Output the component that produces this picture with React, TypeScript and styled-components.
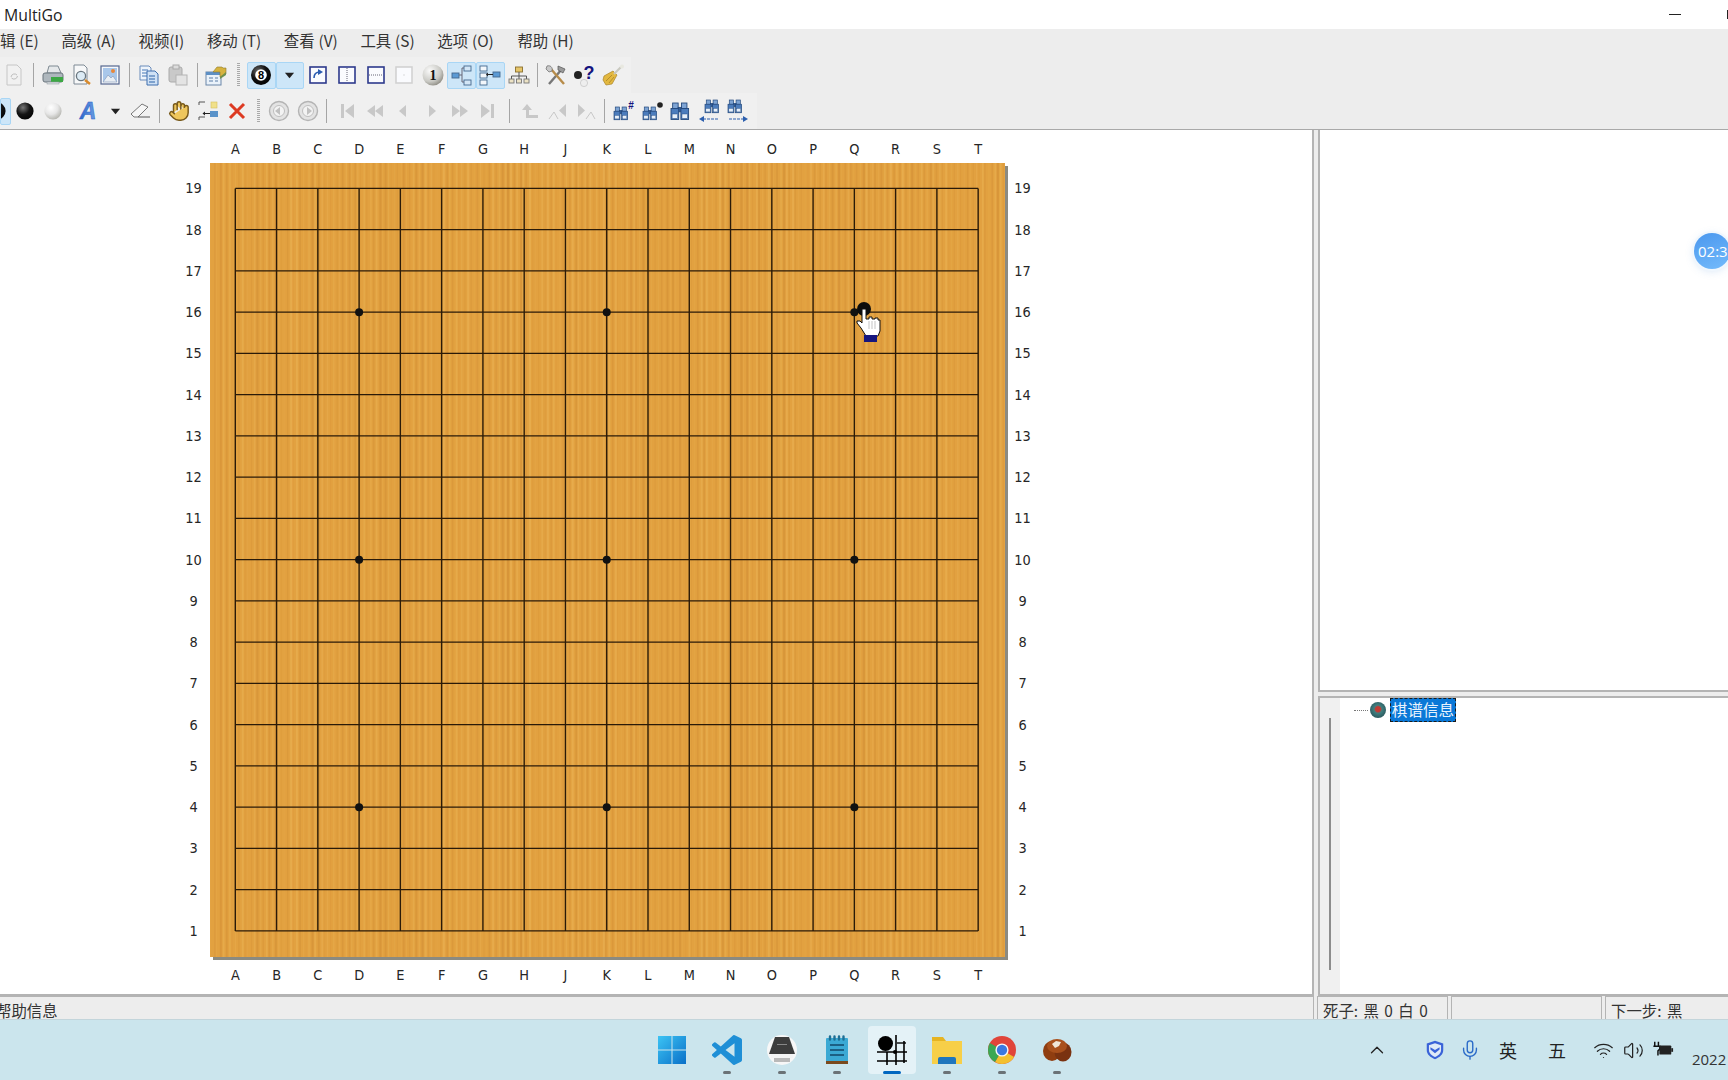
import React from "react";
import styled, { createGlobalStyle } from "styled-components";
import { ChevronUp, Mic, Wifi, Volume2, Hand } from "lucide-react";

const Global = createGlobalStyle`
  html, body { margin: 0; padding: 0; width: 1728px; height: 1080px; overflow: hidden; background: #fff; }
  * { box-sizing: border-box; }
`;

const cjk = `"Noto Sans CJK SC", "Noto Sans", sans-serif`;
const label = `"DejaVu Sans", "Liberation Sans", sans-serif`;

const Screen = styled.div`
  position: relative;
  width: 1728px;
  height: 1080px;
  overflow: hidden;
  display: flex;
  flex-direction: column;
  background: #ededed;
  color: #222;
  font-family: ${cjk};
`;

const TitleBar = styled.div`
  height: 29px;
  flex: none;
  background: #fff;
  display: flex;
  align-items: center;
  padding-left: 4px;
  font: 15.8px "Open Sans", "Noto Sans", sans-serif;
  color: #222;
`;
const TitleText = styled.span`
  flex: 1;
`;
const Minimize = styled.span`
  width: 12px;
  height: 1px;
  background: #222;
  margin-right: 46px;
`;
const MaxEdge = styled.span`
  width: 2px;
  height: 9px;
  background: #222;
  margin-right: -1px;
`;

const MenuBar = styled.div`
  height: 24px;
  flex: none;
  display: flex;
  align-items: center;
  gap: 22.7px;
  word-spacing: 0.4px;
  padding-bottom: 2px;
  font-size: 15.4px;
  color: #333;
  white-space: nowrap;
`;
const MenuItem = styled.span<{ $ml?: number }>`
  margin-left: ${(p) => p.$ml ?? 0}px;
`;

const Toolbars = styled.div`
  height: 77px;
  flex: none;
  padding-top: 4px;
  border-bottom: 1px solid #a9a9a9;
`;
const ToolRow = styled.div<{ $w: number }>`
  width: ${(p) => p.$w}px;
  height: 36px;
  display: flex;
  align-items: center;
  background: #f0f0f0;
`;
const ToolBtn = styled.div<{ $w?: number; $on?: boolean; $mr?: number }>`
  width: ${(p) => p.$w ?? 28.7}px;
  height: 27px;
  flex: none;
  display: flex;
  align-items: center;
  justify-content: center;
  overflow: hidden;
  margin-right: ${(p) => p.$mr ?? 0}px;
  background: ${(p) => (p.$on ? "#cde6f8" : "transparent")};
  border: 1px solid ${(p) => (p.$on ? "#a9d6f5" : "transparent")};
  border-radius: ${(p) => (p.$on ? "2px" : "0")};
`;
const Sep = styled.div<{ $w: number }>`
  width: ${(p) => p.$w}px;
  height: 24px;
  flex: none;
  display: flex;
  justify-content: center;
  &::before {
    content: "";
    width: 1px;
    background: #a5a5a5;
  }
`;
const Grip = styled.div<{ $w: number }>`
  width: ${(p) => p.$w}px;
  height: 24px;
  flex: none;
  display: flex;
  justify-content: center;
  &::before {
    content: "";
    width: 3px;
    background: repeating-linear-gradient(to bottom, #a9a9a9 0 1px, transparent 1px 2px);
  }
`;

const Ico = styled.svg<{ $s?: number }>`
  width: ${(p) => p.$s ?? 24}px;
  height: ${(p) => p.$s ?? 24}px;
  flex: none;
  display: block;
`;
const IconBox = ({ children, s }: { children: React.ReactNode; s?: number }) => (
  <Ico viewBox="0 0 24 24" $s={s}>
    {children}
  </Ico>
);

const DocGhost = () => (
  <IconBox>
    <path d="M5 2h10l4 4v16H5z" fill="#f1f1f1" stroke="#c6c6c6" />
    <path d="M9 14a3.500 3.500 0 0 1 6-2M15.500 13a3.500 3.500 0 0 1-6 2" fill="none" stroke="#bdbdbd" />
  </IconBox>
);
const Printer = () => (
  <IconBox>
    <path d="M8 3h9l3 7H6z" fill="#e5e8ea" stroke="#7f8a92" />
    <rect x="2" y="10" width="20" height="9" rx="2" fill="#aeb7bd" stroke="#69747c" />
    <rect x="10" y="14" width="12" height="5" fill="#3da845" />
    <rect x="6" y="19" width="12" height="2" fill="#d9dde0" stroke="#8a949b" strokeWidth=".5" />
  </IconBox>
);
const Preview = () => (
  <IconBox>
    <path d="M4 2h10l3 3v16H4z" fill="#f7f8f9" stroke="#7e8a95" />
    <circle cx="11" cy="13" r="4.600" fill="#dcebf5" stroke="#69767f" strokeWidth="1.300" />
    <path d="M15 17l5 4" stroke="#d98a2c" strokeWidth="2.500" />
  </IconBox>
);
const ImageIcon = () => (
  <IconBox>
    <rect x="3" y="3" width="18" height="18" fill="#f5f8fb" stroke="#55678f" strokeWidth="1.200" />
    <rect x="5" y="5" width="14" height="14" fill="#a9c7ea" />
    <path d="M5 19l5-7 3 3 2-2 4 6z" fill="#e9eef4" stroke="#8296b6" strokeWidth=".6" />
    <circle cx="15" cy="8" r="2" fill="#e8873a" />
  </IconBox>
);
const lines = (x: number, y: number, c: string) => (
  <path d={`M${x} ${y}h6M${x} ${y + 3}h6M${x} ${y + 6}h6`} stroke={c} strokeWidth="1.200" />
);
const Copy = () => (
  <IconBox>
    <path d="M3 3h9l2 2v12H3z" fill="#eef4fb" stroke="#6b8cbb" />
    {lines(5, 7, "#4678b8")}
    <path d="M10 8h8l3 3v11H10z" fill="#cfe1f5" stroke="#3f6fae" />
    {lines(12, 13, "#2f64a8")}
  </IconBox>
);
const Paste = () => (
  <IconBox>
    <rect x="3" y="4" width="13" height="15" rx="2" fill="#c9c9c9" stroke="#aaa" />
    <rect x="7" y="2" width="6" height="4" fill="#dcdcdc" stroke="#aaa" />
    <rect x="10" y="12" width="11" height="10" fill="#e4e4e4" stroke="#b4b4b4" />
  </IconBox>
);
const Props = () => (
  <IconBox>
    <rect x="2" y="9" width="15" height="13" fill="#eaf2fa" stroke="#6a86a8" />
    <rect x="2" y="9" width="15" height="3" fill="#5d8fc4" />
    <path d="M5 15h4M5 18h4M11 15h3M11 18h3" stroke="#5a7da6" />
    <path d="M9 9l4-5h5l1 1h3v6l-6 3V9z" fill="#d6b33f" stroke="#8f7a2c" strokeWidth=".6" />
    <path d="M16 14l6-5v3l-6 4z" fill="#6f8f4f" />
  </IconBox>
);
const EightBall = () => (
  <IconBox>
    <defs>
      <radialGradient id="eb" cx=".35" cy=".3" r=".8">
        <stop offset="0" stopColor="#666" />
        <stop offset=".5" stopColor="#111" />
        <stop offset="1" stopColor="#000" />
      </radialGradient>
    </defs>
    <circle cx="12" cy="12" r="10" fill="url(#eb)" />
    <circle cx="12" cy="12" r="5.800" fill="#fff" />
    <text x="12" y="15.700" fontSize="11" fontWeight="700" textAnchor="middle" fontFamily="Liberation Sans" fill="#000">
      8
    </text>
  </IconBox>
);
const Caret = () => (
  <Ico viewBox="0 0 12 8" $s={11}>
    <path d="M1 1h10L6 7z" fill="#222" />
  </Ico>
);
const FrameBox = ({ c = "#2d3a8c", children }: { c?: string; children?: React.ReactNode }) => (
  <IconBox>
    <rect x="4" y="4" width="16" height="16" fill="#fafbfe" stroke={c} strokeWidth="1.600" />
    {children}
  </IconBox>
);
const ArrowBox = () => (
  <FrameBox>
    <path d="M8 15c0-4 2-6 6-6" fill="none" stroke="#2a5bb0" strokeWidth="1.600" />
    <path d="M12 6l5 3-5 3z" fill="#2a5bb0" />
  </FrameBox>
);
const VSplit = () => (
  <FrameBox>
    <path d="M12 5v14" stroke="#667" strokeDasharray="1 1" />
  </FrameBox>
);
const HSplit = () => (
  <FrameBox>
    <path d="M5 12h14" stroke="#667" strokeDasharray="1 1" />
  </FrameBox>
);
const BlankBox = () => (
  <FrameBox c="#d2d2d2">
    <rect x="11.500" y="11.500" width="1" height="1" fill="#bbb" />
  </FrameBox>
);
const One = () => (
  <IconBox>
    <defs>
      <radialGradient id="on" cx=".35" cy=".3" r=".85">
        <stop offset="0" stopColor="#fafafa" />
        <stop offset=".6" stopColor="#c9c9c4" />
        <stop offset="1" stopColor="#77746a" />
      </radialGradient>
    </defs>
    <circle cx="12" cy="12" r="10.500" fill="url(#on)" />
    <text x="12" y="17" fontSize="14" fontWeight="700" textAnchor="middle" fontFamily="Liberation Serif" fill="#111">
      1
    </text>
  </IconBox>
);
const Box = ({ x, y, w = 7, h = 5, f = "#d9e9f8", s = "#44688f" }: { x: number; y: number; w?: number; h?: number; f?: string; s?: string }) => (
  <rect x={x} y={y} width={w} height={h} fill={f} stroke={s} strokeWidth=".9" />
);
const TreeA = () => (
  <IconBox>
    <Box x={2} y={10} f="#5b9ad4" />
    <Box x={14} y={3} f="#d3e6f6" />
    <Box x={14} y={17} f="#d3e6f6" />
    <path d="M9 12h3M12 5v14M12 5h2M12 19h2" stroke="#667" fill="none" />
  </IconBox>
);
const TreeB = () => (
  <IconBox>
    <Box x={2} y={3} f="#f3f7fb" />
    <Box x={2} y={10} f="#f3f7fb" />
    <Box x={2} y={17} f="#f3f7fb" />
    <Box x={15} y={9} w={7} h={5} f="#5b9ad4" />
    <path d="M15 11.500H10" stroke="#222" />
    <path d="M10 9.500v4l-2-2z" fill="#222" />
  </IconBox>
);
const Org = () => (
  <IconBox>
    <Box x={8.5} y={4} f="#e6c56a" s="#8a6f2e" />
    <path d="M12 9v4M4.500 16v-3h15v3M12 13v3" stroke="#555" fill="none" />
    <Box x={2} y={16} w={5} h={4} f="#ede3c5" s="#777" />
    <Box x={9.5} y={16} w={5} h={4} f="#ede3c5" s="#777" />
    <Box x={17} y={16} w={5} h={4} f="#ede3c5" s="#777" />
  </IconBox>
);
const Tools = () => (
  <IconBox>
    <path d="M5 21L18 6" stroke="#777" strokeWidth="2.400" />
    <path d="M14 3l7 3-2 4-5-3z" fill="#9a9a9a" stroke="#555" strokeWidth=".7" />
    <path d="M20 21L7 6" stroke="#b78c4a" strokeWidth="2.400" />
    <path d="M3 3c3-1 6 1 5 5l-3 1-3-3z" fill="#c9c9c9" stroke="#666" strokeWidth=".7" />
  </IconBox>
);
const Help = () => (
  <IconBox>
    <circle cx="6" cy="12" r="4" fill="#222" />
    <circle cx="12" cy="20" r="3.600" fill="#eee" stroke="#bbb" strokeWidth=".6" />
    <text x="17" y="16" fontSize="18" fontWeight="700" textAnchor="middle" fontFamily="Liberation Sans" fill="#14147e">
      ?
    </text>
  </IconBox>
);
const Brush = () => (
  <IconBox>
    <path d="M3 13l9-5 4 4-5 9-6 1-3-5z" fill="#e3b83f" stroke="#a9842a" strokeWidth=".7" />
    <path d="M5 18l6-6M8 20l5-6" stroke="#a9842a" strokeWidth=".8" />
    <path d="M13 11l7-7" stroke="#c9c9c0" strokeWidth="2.200" />
    <circle cx="21" cy="3.500" r="2" fill="#e8e8e0" />
  </IconBox>
);

const Stone = ({ id, white }: { id: string; white?: boolean }) => (
  <IconBox>
    <defs>
      <radialGradient id={id} cx=".38" cy=".3" r=".8">
        <stop offset="0" stopColor={white ? "#fff" : "#777"} />
        <stop offset=".5" stopColor={white ? "#e6e6e6" : "#141414"} />
        <stop offset="1" stopColor={white ? "#a9a9a2" : "#000"} />
      </radialGradient>
    </defs>
    <circle cx="12" cy="12" r="8.600" fill={`url(#${id})`} />
  </IconBox>
);
const PartialStone = styled.div`
  margin-left: -17px;
  flex: none;
`;
const LetterA = () => (
  <IconBox>
    <defs>
      <linearGradient id="la" x1="0" y1="0" x2="1" y2="0">
        <stop offset="0" stopColor="#2a62c8" />
        <stop offset="1" stopColor="#6ea2e6" />
      </linearGradient>
    </defs>
    <text x="12" y="20" fontSize="23" fontWeight="700" fontStyle="italic" textAnchor="middle" fontFamily="Liberation Sans" fill="url(#la)" stroke="#2a62c8" strokeWidth=".5">
      A
    </text>
  </IconBox>
);
const Eraser = () => (
  <IconBox>
    <path d="M3 15L14 5l6 3-10 10H6z" fill="#f6f6f6" stroke="#777" />
    <path d="M10 18h12" stroke="#555" />
  </IconBox>
);
const HandIcon = () => <Hand size={22} fill="#eec65c" color="#77591b" strokeWidth={1.6} />;
const TreeAdd = () => (
  <IconBox>
    <path d="M3 3h6M3 3v3M3 18h6M3 18v3" stroke="#555" fill="none" />
    <rect x="15" y="3" width="6" height="6" fill="#f0e08a" stroke="#d5bf5c" strokeWidth=".6" />
    <rect x="14" y="12" width="8" height="6" fill="#5a93c9" />
    <path d="M14 14.500H8" stroke="#222" />
    <path d="M9 12.500v4l-2.500-2z" fill="#222" />
  </IconBox>
);
const Cross = () => (
  <IconBox>
    <path d="M5 5l14 14M19 5L5 19" stroke="#dd3a22" strokeWidth="3" />
  </IconBox>
);
const RoundNav = ({ dir }: { dir: number }) => (
  <IconBox>
    <circle cx="12" cy="12" r="9.500" fill="#e3e3e3" stroke="#b4b4b4" strokeWidth="1.400" />
    <circle cx="12" cy="12" r="5.500" fill="#f3f3f3" stroke="#bfbfbf" />
    <path d={dir < 0 ? "M8 12l5-4v8z" : "M16 12l-5-4v8z"} fill="#c0c0c0" />
  </IconBox>
);
const navFill = "#c8c8c8";
const NavFirst = () => (
  <IconBox>
    <path d="M7 5h3v14H7zM20 5v14l-9-7z" fill={navFill} />
  </IconBox>
);
const NavLast = () => (
  <IconBox>
    <path d="M14 5h3v14h-3zM4 5v14l9-7z" fill={navFill} />
  </IconBox>
);
const NavBack2 = () => (
  <IconBox>
    <path d="M13 6v12l-8-6zM21 6v12l-8-6z" fill={navFill} />
  </IconBox>
);
const NavFwd2 = () => (
  <IconBox>
    <path d="M3 6v12l8-6zM11 6v12l8-6z" fill={navFill} />
  </IconBox>
);
const NavBack = () => (
  <IconBox>
    <path d="M15 6v12l-7-6z" fill={navFill} />
  </IconBox>
);
const NavFwd = () => (
  <IconBox>
    <path d="M9 6v12l7-6z" fill={navFill} />
  </IconBox>
);
const NavUp = () => (
  <IconBox>
    <path d="M5 11l5-6 5 6h-3v5h9v3H9v-8z" fill={navFill} />
  </IconBox>
);
const NavVarL = () => (
  <IconBox>
    <path d="M20 5v13l-7-6.500z" fill={navFill} />
    <path d="M3 20l5-7 4 7" fill="none" stroke={navFill} />
  </IconBox>
);
const NavVarR = () => (
  <IconBox>
    <path d="M4 5v13l7-6.500z" fill={navFill} />
    <path d="M12 20l5-7 4 7" fill="none" stroke={navFill} />
  </IconBox>
);
const BinoShape = ({ x, y, k = 1 }: { x: number; y: number; k?: number }) => (
  <g transform={`translate(${x} ${y}) scale(${k})`} stroke="#23487c" strokeWidth=".8">
    <rect x="1.500" y="0" width="5" height="5" fill="#7ea4d4" />
    <rect x="9.500" y="0" width="5" height="5" fill="#7ea4d4" />
    <rect x="6.500" y="4" width="3" height="4" fill="#35609c" />
    <rect x="0" y="5" width="7" height="10" fill="#4b7cbc" />
    <rect x="9" y="5" width="7" height="10" fill="#4b7cbc" />
    <rect x="1" y="10" width="5" height="4" fill="#e6eff9" strokeWidth=".4" />
    <rect x="10" y="10" width="5" height="4" fill="#e6eff9" strokeWidth=".4" />
  </g>
);
const BinoHash = () => (
  <IconBox>
    <BinoShape x={3} y={8} k={0.85} />
    <text x="20" y="10" fontSize="10" fontWeight="700" textAnchor="middle" fontFamily="Liberation Sans" fill="#14147e">
      #
    </text>
  </IconBox>
);
const BinoDot = () => (
  <IconBox>
    <BinoShape x={3} y={8} k={0.85} />
    <circle cx="20" cy="6" r="2.800" fill="#222" />
  </IconBox>
);
const BinoBig = () => (
  <IconBox>
    <BinoShape x={3} y={4} k={1.100} />
  </IconBox>
);
const BinoL = () => (
  <IconBox>
    <BinoShape x={8} y={1} k={0.85} />
    <path d="M21 20H5" stroke="#2c5fae" strokeDasharray="3 1" />
    <path d="M7 17l-5 3 5 3z" fill="#2c5fae" />
  </IconBox>
);
const BinoR = () => (
  <IconBox>
    <BinoShape x={2} y={1} k={0.85} />
    <path d="M3 20h16" stroke="#2c5fae" strokeDasharray="3 1" />
    <path d="M17 17l5 3-5 3z" fill="#2c5fae" />
  </IconBox>
);

const Main = styled.div`
  flex: 1;
  min-height: 0;
  display: flex;
  gap: 4px;
`;
const BoardPanel = styled.div`
  width: 1314px;
  flex: none;
  background: #fff;
  border-right: 2px solid #b4b4b4;
  border-bottom: 2px solid #b4b4b4;
  padding-left: 176px;
  display: grid;
  grid-template-columns: 34px 795px 34px;
  grid-template-rows: 33px 794px 34px;
  grid-template-areas:
    ". top ."
    "left board right"
    ". bottom .";
  font-family: ${label};
  font-stretch: condensed;
  font-size: 14.4px;
  color: #262626;
`;
const ColLabels = styled.div<{ $area: string; $down: number }>`
  grid-area: ${(p) => p.$area};
  display: flex;
  padding-left: 4.7px;
  padding-top: ${(p) => p.$down}px;
  align-items: center;
`;
const ColLabel = styled.span`
  width: 41.27px;
  text-align: center;
  flex: none;
`;
const RowLabels = styled.div<{ $area: string }>`
  grid-area: ${(p) => p.$area};
  display: flex;
  flex-direction: column;
  padding-top: 4.8px;
  padding-left: 1px;
`;
const RowLabel = styled.span`
  height: 41.25px;
  flex: none;
  display: flex;
  align-items: center;
  justify-content: center;
`;
const Board = styled.div`
  grid-area: board;
  width: 795px;
  height: 794px;
  box-shadow: 3px 3px 0 #8b8a80;
  background: #e3a243;
`;
const BoardSvg = styled.svg`
  width: 795px;
  height: 794px;
  display: block;
`;

const Right = styled.div`
  flex: 1;
  display: flex;
  flex-direction: column;
  gap: 4px;
  min-width: 0;
`;
const TopPane = styled.div`
  height: 562px;
  flex: none;
  background: #fff;
  border-left: 2px solid #b4b4b4;
  border-bottom: 2px solid #b4b4b4;
`;
const TreePane = styled.div`
  flex: 1;
  min-height: 0;
  display: flex;
  background: #fff;
  border-left: 2px solid #b4b4b4;
  border-top: 2px solid #b4b4b4;
  border-bottom: 2px solid #b4b4b4;
`;
const TreeStrip = styled.div`
  width: 20px;
  flex: none;
  background: #f0f0f0;
  padding: 20px 0 24px;
  display: flex;
  justify-content: center;
  &::before {
    content: "";
    width: 2px;
    background: #8d8d8d;
  }
`;
const TreeRow = styled.div`
  height: 24px;
  display: flex;
  align-items: center;
  padding-left: 14px;
`;
const TreeDots = styled.span`
  width: 14px;
  border-top: 1px dotted #777;
  margin-top: 1px;
`;
const TreeNode = styled.span`
  width: 16px;
  height: 16px;
  border-radius: 50%;
  margin-left: 2px;
  margin-right: 4px;
  background: radial-gradient(circle at 50% 45%, #c23a33 0 2.5px, #3f7f80 4px, #1f3f46 100%);
`;
const TreeLabel = styled.span`
  height: 24px;
  width: 66px;
  background: #0a78d7;
  color: #e8f3fd;
  font-size: 15.6px;
  line-height: 23px;
  text-align: center;
  outline: 1px dashed #1a1a1a;
  outline-offset: -1px;
  white-space: nowrap;
`;

const StatusBar = styled.div`
  height: 23px;
  flex: none;
  display: flex;
  gap: 3px;
  font-size: 15.4px;
  word-spacing: 2px;
  overflow: hidden;
  color: #333;
`;
const StatusCell = styled.div<{ $w: number; $left?: boolean; $indent?: number }>`
  width: ${(p) => p.$w}px;
  flex: none;
  border-top: 1px solid #b4b4b4;
  border-right: 1px solid #b4b4b4;
  border-left: ${(p) => (p.$left ? "1px solid #b4b4b4" : "0")};
  padding-left: ${(p) => (p.$left ? "5px" : "0")};
  text-indent: ${(p) => p.$indent ?? 0}px;
  line-height: 26px;
  white-space: nowrap;
  overflow: hidden;
`;

const Taskbar = styled.div`
  height: 61px;
  flex: none;
  background: #cbe5ed;
  display: flex;
  padding-left: 644px;
  overflow: hidden;
  border-top: 1px solid #c3d5db;
`;
const TaskTile = styled.div<{ $active?: boolean }>`
  width: 55.1px;
  flex: none;
  display: flex;
  flex-direction: column;
  align-items: center;
  padding-top: 15px;
  gap: 6px;
  position: relative;
  ${(p) =>
    p.$active
      ? `&::before { content: ""; position: absolute; left: 3.5px; top: 6px; width: 48px; height: 48px; background: #e4f2f7; border-radius: 4px; }`
      : ""}
  & > * {
    position: relative;
  }
`;
const TaskIndicator = styled.span<{ $kind: "none" | "idle" | "active" }>`
  height: 3px;
  width: ${(p) => (p.$kind === "active" ? "18px" : "8px")};
  border-radius: 2px;
  background: ${(p) => (p.$kind === "active" ? "#0067c0" : p.$kind === "idle" ? "#6b7276" : "transparent")};
`;
const TaskSvg = styled.svg`
  width: 30px;
  height: 30px;
  display: block;
`;
const Tray = styled.div`
  display: flex;
  align-items: center;
  margin-left: 278.2px;
  height: 60px;
  flex: none;
  color: #222;
`;
const TrayItem = styled.div<{ $w?: number; $ml?: number }>`
  width: ${(p) => p.$w ?? 30}px;
  margin-left: ${(p) => p.$ml ?? 0}px;
  flex: none;
  display: flex;
  align-items: center;
  justify-content: center;
  font-size: 18px;
  line-height: 1;
`;
const DateText = styled.div`
  margin-left: 15px;
  font: 15px "Open Sans", "Noto Sans", sans-serif;
  padding-top: 17px;
  color: #333;
`;

const Timer = styled.div`
  position: absolute;
  left: 1694px;
  top: 233px;
  width: 36px;
  height: 36px;
  border-radius: 50%;
  background: linear-gradient(160deg, #4a97ee, #74bbfb);
  box-shadow: 0 0 0 2px #f0f7fd, 0 2px 8px rgba(90, 150, 220, 0.25);
  color: #fff;
  font: 15px "Open Sans", "Noto Sans", sans-serif;
  line-height: 37px;
  padding-left: 4px;
  white-space: nowrap;
`;

const cols = "ABCDEFGHJKLMNOPQRST".split("");
const rows = Array.from({ length: 19 }, (_, i) => 19 - i);
const ox = 25.3;
const oy = 25.4;
const dx = 41.27;
const dy = 41.25;
const stripes = Array.from({ length: 260 }, (_, i) => {
  const a = Math.sin(i * 12.9898) * 43758.5453;
  const r = a - Math.floor(a);
  const b = Math.sin(i * 78.233) * 12543.17;
  const q = b - Math.floor(b);
  return {
    x: i * 3.06 + r * 1.2,
    w: 0.8 + q * 1.4,
    c: i % 2 === 0 ? "#eab355" : "#d18e35",
    o: 0.2 + q * 0.4,
  };
});

const GoBoard = () => (
  <BoardSvg viewBox="0 0 795 794">
    <rect width="795" height="794" fill="#e2a140" />
    {stripes.map((s, i) => (
      <rect key={i} x={s.x} y="0" width={s.w} height="794" fill={s.c} opacity={s.o} />
    ))}
    {rows.map((_, i) => (
      <line key={i} x1={ox} x2={ox + 18 * dx} y1={oy + i * dy} y2={oy + i * dy} stroke="#2a1a08" strokeWidth="1.4" />
    ))}
    {cols.map((_, i) => (
      <line key={i} y1={oy} y2={oy + 18 * dy} x1={ox + i * dx} x2={ox + i * dx} stroke="#2a1a08" strokeWidth="1.4" />
    ))}
    {[3, 9, 15].flatMap((c) =>
      [3, 9, 15].map((r) => <circle key={`${c}-${r}`} cx={ox + c * dx} cy={oy + r * dy} r="4" fill="#111" />)
    )}
    <circle cx="654" cy="146" r="7" fill="#0c0c0c" />
    <path
      d="M652 146h4v10h3v-2h3v2h3v-1h3v2h2v11l-2 5h-12l-5-8-4-5v-2h3l2 2z"
      fill="#fff"
      stroke="#111"
      strokeWidth="1"
    />
    <path d="M659 158v8M662 158v8M665 158v8" stroke="#aaa" strokeWidth=".7" />
    <rect x="654" y="172" width="13" height="7" fill="#16167e" />
  </BoardSvg>
);

const App = () => (
  <Screen>
    <Global />
    <TitleBar>
      <TitleText>MultiGo</TitleText>
      <Minimize />
      <MaxEdge />
    </TitleBar>
    <MenuBar>
      <MenuItem>辑 (E)</MenuItem>
      <MenuItem>高级 (A)</MenuItem>
      <MenuItem>视频(I)</MenuItem>
      <MenuItem>移动 (T)</MenuItem>
      <MenuItem>查看 (V)</MenuItem>
      <MenuItem>工具 (S)</MenuItem>
      <MenuItem>选项 (O)</MenuItem>
      <MenuItem $ml={1}>帮助 (H)</MenuItem>
    </MenuBar>
    <Toolbars>
      <ToolRow $w={631}>
        <ToolBtn><DocGhost /></ToolBtn>
        <Sep $w={10} />
        <ToolBtn><Printer /></ToolBtn>
        <ToolBtn><Preview /></ToolBtn>
        <ToolBtn><ImageIcon /></ToolBtn>
        <Sep $w={10} />
        <ToolBtn><Copy /></ToolBtn>
        <ToolBtn><Paste /></ToolBtn>
        <Sep $w={10} />
        <ToolBtn><Props /></ToolBtn>
        <Grip $w={16} />
        <ToolBtn $w={29} $on><EightBall /></ToolBtn>
        <ToolBtn $w={28} $on><Caret /></ToolBtn>
        <ToolBtn><ArrowBox /></ToolBtn>
        <ToolBtn><VSplit /></ToolBtn>
        <ToolBtn><HSplit /></ToolBtn>
        <ToolBtn><BlankBox /></ToolBtn>
        <ToolBtn><One /></ToolBtn>
        <ToolBtn $on><TreeA /></ToolBtn>
        <ToolBtn $on><TreeB /></ToolBtn>
        <ToolBtn><Org /></ToolBtn>
        <Sep $w={8} />
        <ToolBtn><Tools /></ToolBtn>
        <ToolBtn><Help /></ToolBtn>
        <ToolBtn><Brush /></ToolBtn>
      </ToolRow>
      <ToolRow $w={757}>
        <ToolBtn $w={11} $on>
          <PartialStone><Stone id="s0" /></PartialStone>
        </ToolBtn>
        <ToolBtn $w={27}><Stone id="s1" /></ToolBtn>
        <ToolBtn $w={29} $mr={6}><Stone id="s2" white /></ToolBtn>
        <ToolBtn $w={30}><LetterA /></ToolBtn>
        <ToolBtn $w={24}><Caret /></ToolBtn>
        <ToolBtn $w={26}><Eraser /></ToolBtn>
        <Sep $w={12} />
        <ToolBtn><HandIcon /></ToolBtn>
        <ToolBtn><TreeAdd /></ToolBtn>
        <ToolBtn><Cross /></ToolBtn>
        <Grip $w={14} />
        <ToolBtn><RoundNav dir={-1} /></ToolBtn>
        <ToolBtn><RoundNav dir={1} /></ToolBtn>
        <Sep $w={9} />
        <ToolBtn><NavFirst /></ToolBtn>
        <ToolBtn><NavBack2 /></ToolBtn>
        <ToolBtn><NavBack /></ToolBtn>
        <ToolBtn><NavFwd /></ToolBtn>
        <ToolBtn><NavFwd2 /></ToolBtn>
        <ToolBtn><NavLast /></ToolBtn>
        <Sep $w={11} />
        <ToolBtn><NavUp /></ToolBtn>
        <ToolBtn><NavVarL /></ToolBtn>
        <ToolBtn><NavVarR /></ToolBtn>
        <Sep $w={8} />
        <ToolBtn><BinoHash /></ToolBtn>
        <ToolBtn><BinoDot /></ToolBtn>
        <ToolBtn><BinoBig /></ToolBtn>
        <ToolBtn><BinoL /></ToolBtn>
        <ToolBtn><BinoR /></ToolBtn>
      </ToolRow>
    </Toolbars>
    <Main>
      <BoardPanel>
        <ColLabels $area="top" $down={4}>{cols.map((c) => <ColLabel key={c}>{c}</ColLabel>)}</ColLabels>
        <RowLabels $area="left">{rows.map((r) => <RowLabel key={r}>{r}</RowLabel>)}</RowLabels>
        <Board><GoBoard /></Board>
        <RowLabels $area="right">{rows.map((r) => <RowLabel key={r}>{r}</RowLabel>)}</RowLabels>
        <ColLabels $area="bottom" $down={2}>{cols.map((c) => <ColLabel key={c}>{c}</ColLabel>)}</ColLabels>
      </BoardPanel>
      <Right>
        <TopPane />
        <TreePane>
          <TreeStrip />
          <div>
            <TreeRow>
              <TreeDots />
              <TreeNode />
              <TreeLabel>棋谱信息</TreeLabel>
            </TreeRow>
          </div>
        </TreePane>
      </Right>
    </Main>
    <StatusBar>
      <StatusCell $w={1314} $indent={-4}>帮助信息</StatusCell>
      <StatusCell $w={131} $left>死子: 黑 0 白 0</StatusCell>
      <StatusCell $w={151} $left />
      <StatusCell $w={126} $left>下一步: 黑</StatusCell>
    </StatusBar>
    <Taskbar>
      <TaskTile>
        <TaskSvg viewBox="0 0 30 30">
          <defs>
            <linearGradient id="win" x1="0" y1="0" x2="1" y2="1">
              <stop offset="0" stopColor="#3cc4f4" />
              <stop offset="1" stopColor="#0a70c8" />
            </linearGradient>
          </defs>
          <path d="M1 1h13.500v13.500H1zM15.500 1H29v13.500H15.500zM1 15.500h13.500V29H1zM15.500 15.500H29V29H15.500z" fill="url(#win)" />
        </TaskSvg>
        <TaskIndicator $kind="none" />
      </TaskTile>
      <TaskTile>
        <TaskSvg viewBox="0 0 24 24">
          <path
            d="M23.15 2.587L18.21.21a1.494 1.494 0 0 0-1.705.29l-9.46 8.63-4.12-3.128a.999.999 0 0 0-1.276.057L.327 7.261A1 1 0 0 0 .326 8.74L3.899 12 .326 15.26a1 1 0 0 0 .001 1.479L1.65 17.94a.999.999 0 0 0 1.276.057l4.12-3.128 9.46 8.63a1.492 1.492 0 0 0 1.704.29l4.942-2.377A1.500 1.500 0 0 0 24 20.06V3.939a1.500 1.500 0 0 0-.85-1.352zm-5.146 14.861L10.826 12l7.178-5.448v10.896z"
            fill="#1f8fd6"
          />
        </TaskSvg>
        <TaskIndicator $kind="idle" />
      </TaskTile>
      <TaskTile>
        <TaskSvg viewBox="0 0 30 30">
          <circle cx="15" cy="15" r="15" fill="#f7f7f7" />
          <path d="M8 2h14l6 17H2z" fill="#3d3d3d" />
          <rect x="10" y="9" width="10" height="1" fill="#888" />
          <rect x="4" y="19" width="22" height="4" fill="#f4f4f4" />
          <rect x="7" y="23" width="16" height="4" fill="#b9b9b9" />
        </TaskSvg>
        <TaskIndicator $kind="idle" />
      </TaskTile>
      <TaskTile>
        <TaskSvg viewBox="0 0 30 30">
          <rect x="4" y="3" width="22" height="24" rx="1" fill="#3ba9d4" />
          <rect x="4" y="26" width="22" height="3" fill="#7a4a1e" />
          <path d="M8 1.500v3M12.500 1.500v3M17 1.500v3M21.500 1.500v3" stroke="#1d6f95" strokeWidth="2.400" strokeLinecap="round" />
          <path d="M8 10h14M8 15h14M8 20h14" stroke="#13486a" strokeWidth="1.600" />
        </TaskSvg>
        <TaskIndicator $kind="idle" />
      </TaskTile>
      <TaskTile $active>
        <TaskSvg viewBox="0 0 30 30">
          <path d="M19 0v30M0 17h30M0 26h30M10 17v13M27 6v22" stroke="#000" strokeWidth="1.600" />
          <circle cx="8.500" cy="8.500" r="7.500" fill="#000" />
          <circle cx="18" cy="17" r="2" fill="#000" />
          <path d="M20 8h9" stroke="#000" strokeWidth="1.400" />
        </TaskSvg>
        <TaskIndicator $kind="active" />
      </TaskTile>
      <TaskTile>
        <TaskSvg viewBox="0 0 30 30">
          <path d="M0 2h11l3 4h16v23H0z" fill="#e6b422" />
          <rect y="6" width="30" height="23" fill="#f7cf48" />
          <path d="M6 29v-5a2 2 0 0 1 2-2h14a2 2 0 0 1 2 2v5z" fill="#1f76bd" />
        </TaskSvg>
        <TaskIndicator $kind="idle" />
      </TaskTile>
      <TaskTile>
        <TaskSvg viewBox="0 0 30 30">
          <circle cx="15" cy="15" r="14" fill="#e0453a" />
          <path d="M15 15L27.100 22A14 14 0 0 1 15 29 14 14 0 0 1 8 27.100z" fill="#f3c02f" />
          <path d="M15 15L8 27.100A14 14 0 0 1 1 15 14 14 0 0 1 2.900 8z" fill="#3aa853" />
          <circle cx="15" cy="15" r="6.600" fill="#f7f7f7" />
          <circle cx="15" cy="15" r="5.200" fill="#3a78e0" />
        </TaskSvg>
        <TaskIndicator $kind="idle" />
      </TaskTile>
      <TaskTile>
        <TaskSvg viewBox="0 0 30 30">
          <ellipse cx="10" cy="16" rx="9" ry="10" fill="#8f3d10" />
          <ellipse cx="21" cy="17" rx="8.500" ry="9.500" fill="#7a3210" />
          <ellipse cx="15" cy="11" rx="10" ry="7" fill="#a9501c" />
          <path d="M10 9l4-3 5 1-2 4-4 2z" fill="#f0e6d8" />
        </TaskSvg>
        <TaskIndicator $kind="idle" />
      </TaskTile>
      <Tray>
        <TrayItem $w={28}><ChevronUp size={22} strokeWidth={1.4} color="#222" /></TrayItem>
        <TrayItem $ml={29}>
          <Ico viewBox="0 0 24 24" $s={22}>
            <path d="M12 2l9 3v7c0 5-4 8-9 10-5-2-9-5-9-10V5z" fill="#3a63d8" />
            <path d="M12 4.500l6.600 2.200V12c0 3.600-3 6-6.600 7.600C8.400 18 5.400 15.600 5.400 12V6.700z" fill="#dfeaf7" />
            <path d="M7 9l5 3 5-3v2.500l-5 4-5-4z" fill="#3a63d8" />
          </Ico>
        </TrayItem>
        <TrayItem $ml={5}><Mic size={22} strokeWidth={1.5} color="#2a6ac8" /></TrayItem>
        <TrayItem $ml={8}>英</TrayItem>
        <TrayItem $ml={19}>五</TrayItem>
        <TrayItem $ml={18} $w={28}><Wifi size={21} strokeWidth={1.4} color="#222" /></TrayItem>
        <TrayItem $ml={2} $w={28}><Volume2 size={21} strokeWidth={1.4} color="#222" /></TrayItem>
        <TrayItem $ml={1} $w={28}>
          <Ico viewBox="0 0 24 24" $s={22}>
            <path d="M3 3v5M7 3v5M1.500 8h7v3l-2 2v5" stroke="#111" strokeWidth="1.600" fill="none" />
            <rect x="8" y="7" width="13" height="10" rx="1" fill="#222" />
            <rect x="21" y="10" width="2" height="4" fill="#222" />
          </Ico>
        </TrayItem>
        <DateText>2022</DateText>
      </Tray>
    </Taskbar>
    <Timer>02:30</Timer>
  </Screen>
);

export default App;
